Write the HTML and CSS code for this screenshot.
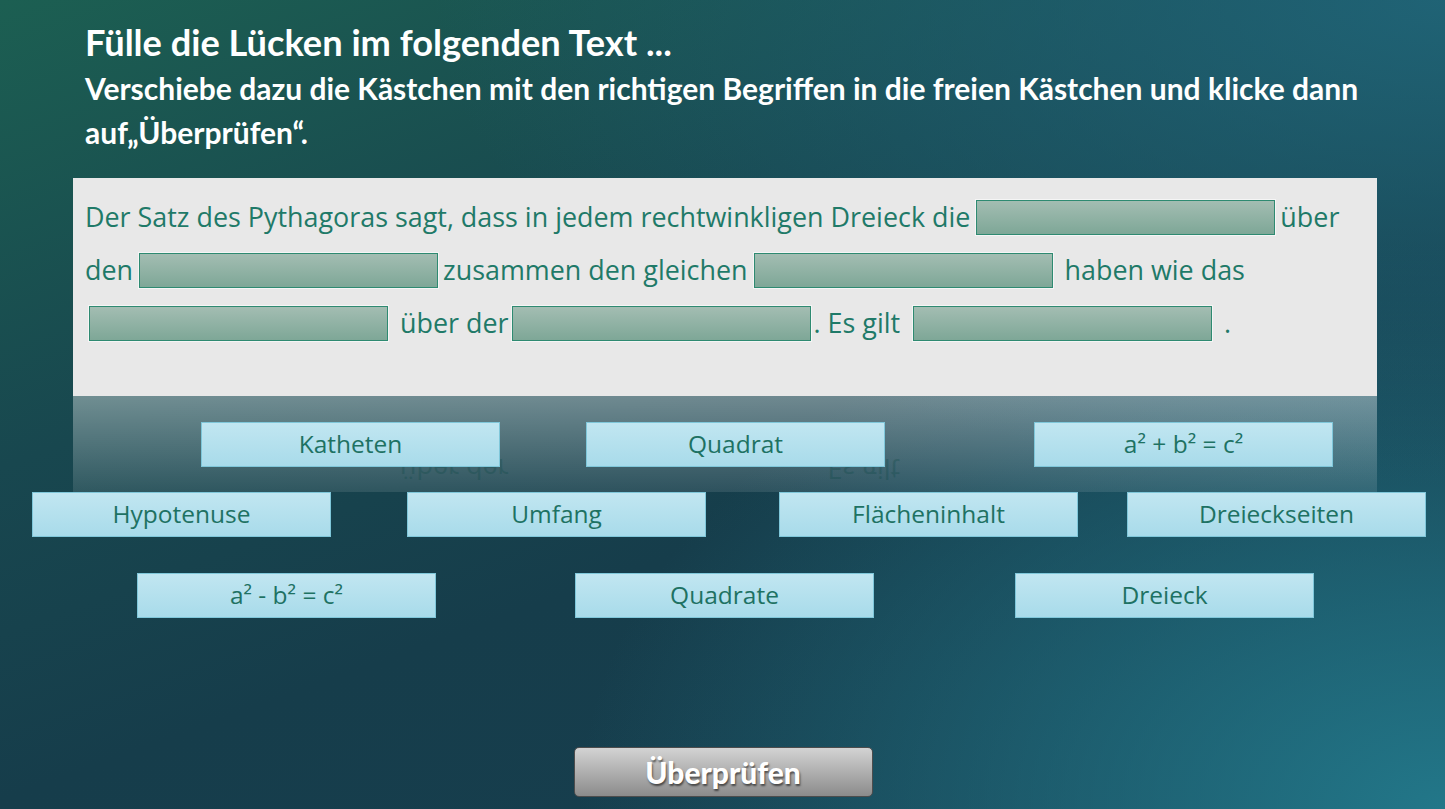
FILE: index.html
```html
<!DOCTYPE html>
<html lang="de">
<head>
<meta charset="utf-8">
<title>Lückentext – Satz des Pythagoras</title>
<link rel="stylesheet" href="styles.css">
</head>
<body>
<main class="page">
  <header class="intro">
    <h1 class="title">Fülle die Lücken im folgenden Text ...</h1>
    <p class="subtitle">Verschiebe dazu die Kästchen mit den richtigen Begriffen in die freien Kästchen und klicke dann<br>auf„Überprüfen“.</p>
  </header>

  <section class="workspace">
    <div class="panel">
      <p class="cloze">
        <span class="line">Der Satz des Pythagoras sagt, dass in jedem rechtwinkligen Dreieck die<span class="gap"></span>über</span>
        <span class="line">den<span class="gap"></span>zusammen den gleichen<span class="gap"></span> haben wie das</span>
        <span class="line"><span class="gap gap-first"></span> über der<span class="gap gap-tight"></span>. Es gilt <span class="gap"></span> .</span>
      </p>
    </div>
    <div class="reflection" aria-hidden="true">
      <div class="mirror"><span class="gap gap-first ghost"></span> über der<span class="gap gap-tight ghost"></span>. Es gilt</div>
    </div>

    <div class="chip" style="left:201px;top:244px">Katheten</div>
    <div class="chip" style="left:586px;top:244px">Quadrat</div>
    <div class="chip" style="left:1034px;top:244px">a² + b² = c²</div>
    <div class="chip" style="left:32px;top:314px">Hypotenuse</div>
    <div class="chip" style="left:407px;top:314px">Umfang</div>
    <div class="chip" style="left:779px;top:314px">Flächeninhalt</div>
    <div class="chip" style="left:1127px;top:314px">Dreieckseiten</div>
    <div class="chip" style="left:137px;top:395px">a² - b² = c²</div>
    <div class="chip" style="left:575px;top:395px">Quadrate</div>
    <div class="chip" style="left:1015px;top:395px">Dreieck</div>
  </section>

  <button class="check" type="button">Überprüfen</button>
</main>
</body>
</html>
```
FILE: styles.css
```css
html, body {
  margin: 0;
  height: 100%;
  overflow: hidden;
}
body {
  font-family: "Open Sans", "Liberation Sans", sans-serif;
  background:
    radial-gradient(ellipse 70% 60% at 100% 0%, rgba(33, 104, 124, 0.85), rgba(33, 104, 124, 0) 100%),
    radial-gradient(ellipse 60% 70% at 100% 100%, rgba(35, 122, 140, 0.95), rgba(35, 122, 140, 0) 100%),
    linear-gradient(160deg, #1c5f52 0%, #18474f 35%, #163d4b 60%, #173f50 100%);
}
.page {
  display: flex;
  flex-direction: column;
  padding-top: 20px;
  height: 100%;
  box-sizing: border-box;
}
.intro {
  padding-left: 85px;
  color: #fff;
}
.title {
  margin: 0;
  font-family: "Lato", sans-serif;
  font-weight: 700;
  font-size: 36.2px;
  line-height: 44px;
}
.subtitle {
  margin: 2px 0 0;
  font-family: "Lato", sans-serif;
  font-weight: 700;
  font-size: 30px;
  line-height: 44px;
}
.workspace {
  position: relative;
  margin-top: 24px;
}
.panel {
  margin-left: 73px;
  width: 1304px;
  height: 218px;
  box-sizing: border-box;
  padding: 12px 0 0 12px;
  background: #e8e8e8;
}
.cloze {
  margin: 0;
  color: #1f7a68;
  font-size: 26.9px;
  line-height: 53px;
}
.line {
  display: block;
  white-space: nowrap;
}
.gap {
  display: inline-block;
  vertical-align: middle;
  width: 297px;
  height: 33px;
  margin: -5px 5px 0 6px;
  border: 1px solid #2e8a71;
  background: linear-gradient(#a3bdb2, #7ea797);
  box-shadow: 0 0 0 1px rgba(255, 255, 255, 0.55);
}
.gap-first {
  margin-left: 4px;
}
.gap-tight {
  margin-left: 3px;
  margin-right: 3px;
}
.reflection {
  margin-left: 73px;
  width: 1304px;
  height: 96px;
  overflow: hidden;
  background: linear-gradient(rgba(255, 255, 255, 0.38), rgba(255, 255, 255, 0.1));
}
.mirror {
  margin-top: 47px;
  padding-left: 12px;
  height: 53px;
  line-height: 53px;
  font-size: 26.9px;
  white-space: nowrap;
  color: #0f4a48;
  opacity: 0.3;
  transform: scaleY(-1);
}
.ghost {
  visibility: hidden;
}
.chip {
  position: absolute;
  width: 299px;
  height: 45px;
  box-sizing: border-box;
  border: 1px solid #7fc7da;
  background: linear-gradient(#c1e6f1, #a8dbea);
  color: #1e7263;
  font-size: 24.5px;
  line-height: 42px;
  text-align: center;
}
.check {
  align-self: center;
  margin: 255px 0 0 1px;
  width: 299px;
  height: 50px;
  border: 1px solid #4d4d4d;
  border-radius: 5px;
  background: linear-gradient(#d3d3d3, #8b8b8b);
  color: #fff;
  font-family: "Lato", sans-serif;
  font-weight: 900;
  font-size: 30px;
  line-height: 46px;
  padding: 0;
  text-shadow: 1px 2px 2px rgba(0, 0, 0, 0.55);
}
```
